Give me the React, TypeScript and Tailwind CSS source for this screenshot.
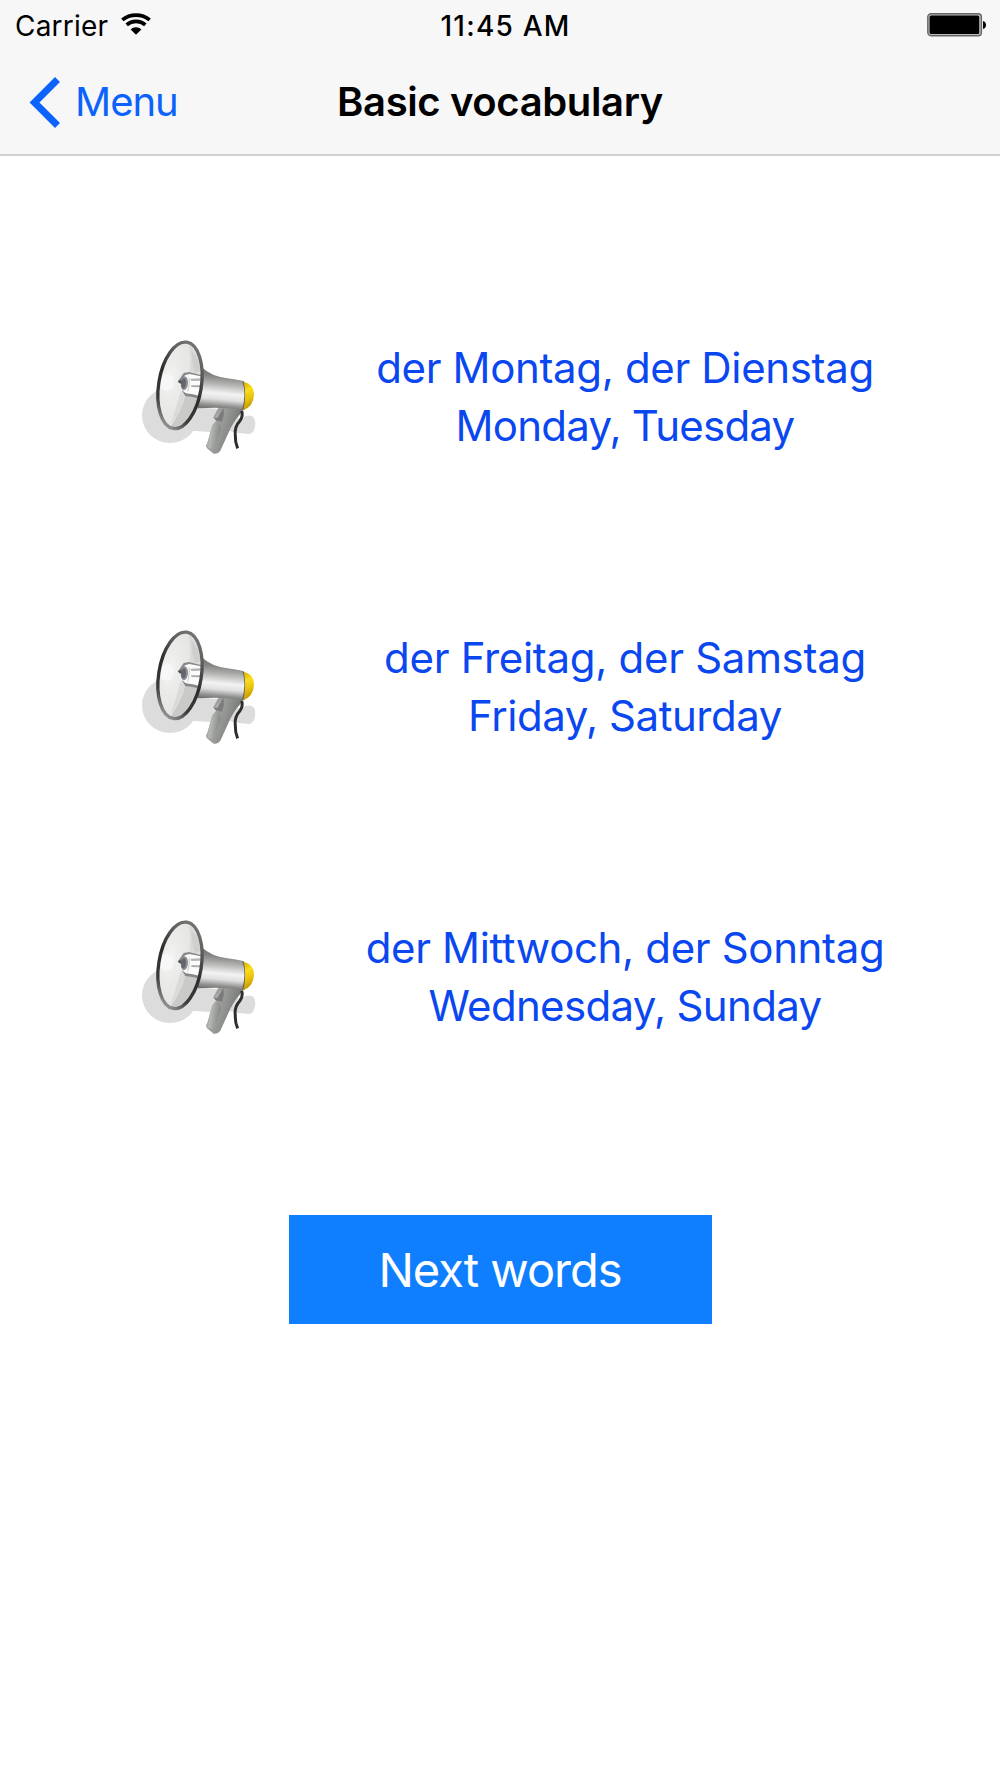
import React from 'react';

interface Word {
  german: string;
  english: string;
  germanSpacing: string;
  englishSpacing: string;
}

const words: Word[] = [
  {
    german: 'der Montag, der Dienstag',
    english: 'Monday, Tuesday',
    germanSpacing: 'tracking-[-0.35px]',
    englishSpacing: 'tracking-[-0.75px]',
  },
  {
    german: 'der Freitag, der Samstag',
    english: 'Friday, Saturday',
    germanSpacing: 'tracking-[-0.3px]',
    englishSpacing: 'tracking-[-0.45px]',
  },
  {
    german: 'der Mittwoch, der Sonntag',
    english: 'Wednesday, Sunday',
    germanSpacing: 'tracking-[-0.35px]',
    englishSpacing: 'tracking-[-0.65px]',
  },
];

function WifiIcon() {
  return (
    <svg viewBox="0 0 90 65" className="mb-[4px] h-[22px] w-[30px]" aria-hidden="true">
      <path d="M4 20C27 1 63 1 86 20" fill="none" stroke="#000" strokeWidth="11" />
      <path d="M17 35C33 21 57 21 73 35" fill="none" stroke="#000" strokeWidth="11" />
      <path d="M29 49C38 40 52 40 61 49L45 65Z" fill="#000" />
    </svg>
  );
}

function BatteryIcon() {
  return (
    <svg viewBox="0 0 60 24" className="mb-[3px] h-[24px] w-[60px]" aria-hidden="true">
      <rect x="0.8" y="0.8" width="53.6" height="22" rx="3.2" fill="#bbb" stroke="#666" strokeWidth="1.4" />
      <rect x="2.6" y="2.6" width="49.6" height="18.4" rx="1.5" fill="#000" />
      <path d="M56 8C60 8.5 60 15.5 56 16Z" fill="#000" />
    </svg>
  );
}

function MegaphoneIcon({ id }: { id: string }) {
  return (
    <svg viewBox="0 0 420 405" className="h-[135px] w-[140px]" aria-hidden="true">
      <defs>
        <linearGradient id={`${id}-body`} x1="0.56" y1="0" x2="0.46" y2="1">
          <stop offset="0" stopColor="#6a6b69" />
          <stop offset="0.22" stopColor="#858684" />
          <stop offset="0.42" stopColor="#b9bab8" />
          <stop offset="0.62" stopColor="#f3f3f3" />
          <stop offset="0.76" stopColor="#dfdfdf" />
          <stop offset="0.9" stopColor="#949593" />
          <stop offset="1" stopColor="#6d6e6c" />
        </linearGradient>
        <linearGradient id={`${id}-handle`} x1="0" y1="0" x2="1" y2="0.35">
          <stop offset="0" stopColor="#a4a6a3" />
          <stop offset="0.45" stopColor="#9b9d9a" />
          <stop offset="0.75" stopColor="#838582" />
          <stop offset="1" stopColor="#6f716e" />
        </linearGradient>
        <linearGradient id={`${id}-grip`} x1="0" y1="0" x2="1" y2="0.25">
          <stop offset="0" stopColor="#8e908d" />
          <stop offset="0.4" stopColor="#b5b7b4" />
          <stop offset="1" stopColor="#858784" />
        </linearGradient>
        <linearGradient id={`${id}-cap`} x1="0.3" y1="0" x2="0.5" y2="1">
          <stop offset="0" stopColor="#d8b400" />
          <stop offset="0.3" stopColor="#fbdd1a" />
          <stop offset="0.6" stopColor="#ebc40c" />
          <stop offset="1" stopColor="#b98f00" />
        </linearGradient>
        <linearGradient id={`${id}-rim`} x1="0.7" y1="0" x2="0.4" y2="1">
          <stop offset="0" stopColor="#747673" />
          <stop offset="0.2" stopColor="#5f615e" />
          <stop offset="0.5" stopColor="#2b2c2b" />
          <stop offset="0.8" stopColor="#3a3a3a" />
          <stop offset="1" stopColor="#8f8f8f" />
        </linearGradient>
        <radialGradient id={`${id}-dish`} cx="0.25" cy="0.45" r="0.8">
          <stop offset="0" stopColor="#f4f4f3" />
          <stop offset="0.3" stopColor="#ebebea" />
          <stop offset="1" stopColor="#dfdfdd" />
        </radialGradient>
      </defs>

      {/* Shadow on the ground */}
      <ellipse cx="120" cy="256" rx="84" ry="83" fill="#dcdcdc" />
      <path d="M185 232L285 238L330 268Q350 252 367 259Q381 270 373 296Q370 309 357 312L318 308L290 300L240 306L185 302Z" fill="#dcdcdc" />

      {/* Handle */}
      <path d="M246 232L342 230Q333 252 318 268Q307 285 302 294L271 362Q262 374 251 371L231 355Q226 347 232 341L247 286L262 268Q248 262 252 258L266 232Z" fill={`url(#${id}-handle)`} />
      <path d="M247 286Q260 270 269 280L273 298Q264 330 246 358L231 352Q226 347 232 339Z" fill={`url(#${id}-grip)`} />
      <path d="M281 235L250 262L257 271L276 275Q284 255 281 235Z" fill="#7a7c79" />
      <path d="M278 236L250 262L262 265Z" fill="#aaaca9" />

      {/* Horn */}
      <path d="M215 112Q244 139 292 145Q318 149 340 153Q351 190 338 239Q278 230 203 235Z" fill={`url(#${id}-body)`} />
      <path d="M337 153Q350 191 336 240L344 239Q353 195 343 156Z" fill="#66645a" />
      <path d="M341 155Q372 162 372 194Q370 230 340 240Q351 194 341 155Z" fill={`url(#${id}-cap)`} />

      {/* Dish */}
      <ellipse cx="150" cy="166" rx="64" ry="131" transform="rotate(9 150 166)" fill={`url(#${id}-dish)`} />
      <path d="M176 44Q206 62 212 119L206 132L178 126Q185 85 176 44Z" fill="#dadad8" />
      <path d="M184 62Q206 82 212 122L195 129Q186 100 184 62Z" fill="#cfcfcd" />
      <path d="M166 195Q156 240 122 290Q156 296 185 252Q201 224 207 207Z" fill="#cacac8" />
      <path d="M152 184L166 195Q155 242 121 284Q141 229 152 184Z" fill="#dadad8" />
      <ellipse cx="110" cy="158" rx="21" ry="25" fill="#f7f7f7" />

      {/* Driver inside the dish */}
      <path d="M146 154L161 130L177 127L213 135L210 206L168 194L154 181Z" fill="#fbfbfb" />
      <path d="M144 154L161 129L177 126L213 135L213 139L178 132L165 136L152 157Z" fill="#88898b" />
      <path d="M182 146L213 145L213 152L184 153Z" fill="#b4b5b7" />
      <path d="M184 166L212 166L211 172L184 171Z" fill="#a9aaac" />
      <path d="M154 179L168 190L188 193L211 198L209 207L187 201L166 198Z" fill="#85878a" />
      <path d="M176 139L181 148L177 180L171 188Q177 162 176 139Z" fill="#d2d3d5" />
      <ellipse cx="163" cy="160" rx="11" ry="21" transform="rotate(5 163 160)" fill="#8c8e92" />
      <ellipse cx="161" cy="160" rx="7" ry="15" transform="rotate(5 161 160)" fill="#63666b" />
      <path d="M143 154L154 149L156 161L148 160Z" fill="#555" />

      <ellipse cx="150" cy="166" rx="64" ry="131" transform="rotate(9 150 166)" fill="none" stroke={`url(#${id}-rim)`} strokeWidth="10" />

      {/* Cord */}
      <path d="M335 242Q340 257 330 272Q312 291 316 317Q315 337 323 355" fill="none" stroke="#2e2e2e" strokeWidth="9" />
    </svg>
  );
}

export default function App() {
  return (
    <div className="flex h-[1778px] w-[1000px] flex-col overflow-hidden bg-white font-['Inter',sans-serif]">
      {/* Status bar and navigation */}
      <header className="h-[156px] shrink-0 border-b-2 border-[#d1d1d1] bg-[#f7f7f7] text-black">
        <div className="grid h-[52px] grid-cols-[425px_161px_1fr] items-center pr-[13px] text-[28px] leading-[52px]">
          <div className="flex items-center gap-[13px] pl-[15px]">
            <span className="tracking-[0.2px]">Carrier</span>
            <WifiIcon />
          </div>
          <span className="text-center font-medium tracking-[1.2px] whitespace-nowrap">11:45 AM</span>
          <div className="flex justify-end">
            <BatteryIcon />
          </div>
        </div>
        <nav className="grid h-[100px] grid-cols-[1fr_340px_1fr] items-center text-[40px] leading-[100px]">
          <button className="flex items-center gap-[15px] pl-[29px] text-[#0c63fb]">
            <svg viewBox="0 0 31 51" className="h-[51px] w-[31px]" aria-hidden="true">
              <path d="M28.5 2.5L5.5 25.5L28.5 48.5" fill="none" stroke="currentColor" strokeWidth="7" />
            </svg>
            <span className="tracking-[-1px]">Menu</span>
          </button>
          <h1 className="text-center font-semibold tracking-[-0.37px] whitespace-nowrap">Basic vocabulary</h1>
        </nav>
      </header>

      <main className="flex flex-col items-center pt-[96px]">
        {words.map((word, index) => (
          <button key={word.german} className="flex h-[290px] w-full items-center pl-[130px] text-[#0a47f0]">
            <MegaphoneIcon id={`megaphone-${index}`} />
            <span className="ml-[75px] flex w-[560px] flex-col text-center text-[42px] leading-[58px] whitespace-nowrap">
              <span className={word.germanSpacing}>{word.german}</span>
              <span className={word.englishSpacing}>{word.english}</span>
            </span>
          </button>
        ))}

        <button className="mt-[93px] h-[109px] w-[423px] bg-[#0f7fff] text-[47px] leading-[109px] font-normal tracking-[-1px] text-white">
          Next words
        </button>
      </main>
    </div>
  );
}
